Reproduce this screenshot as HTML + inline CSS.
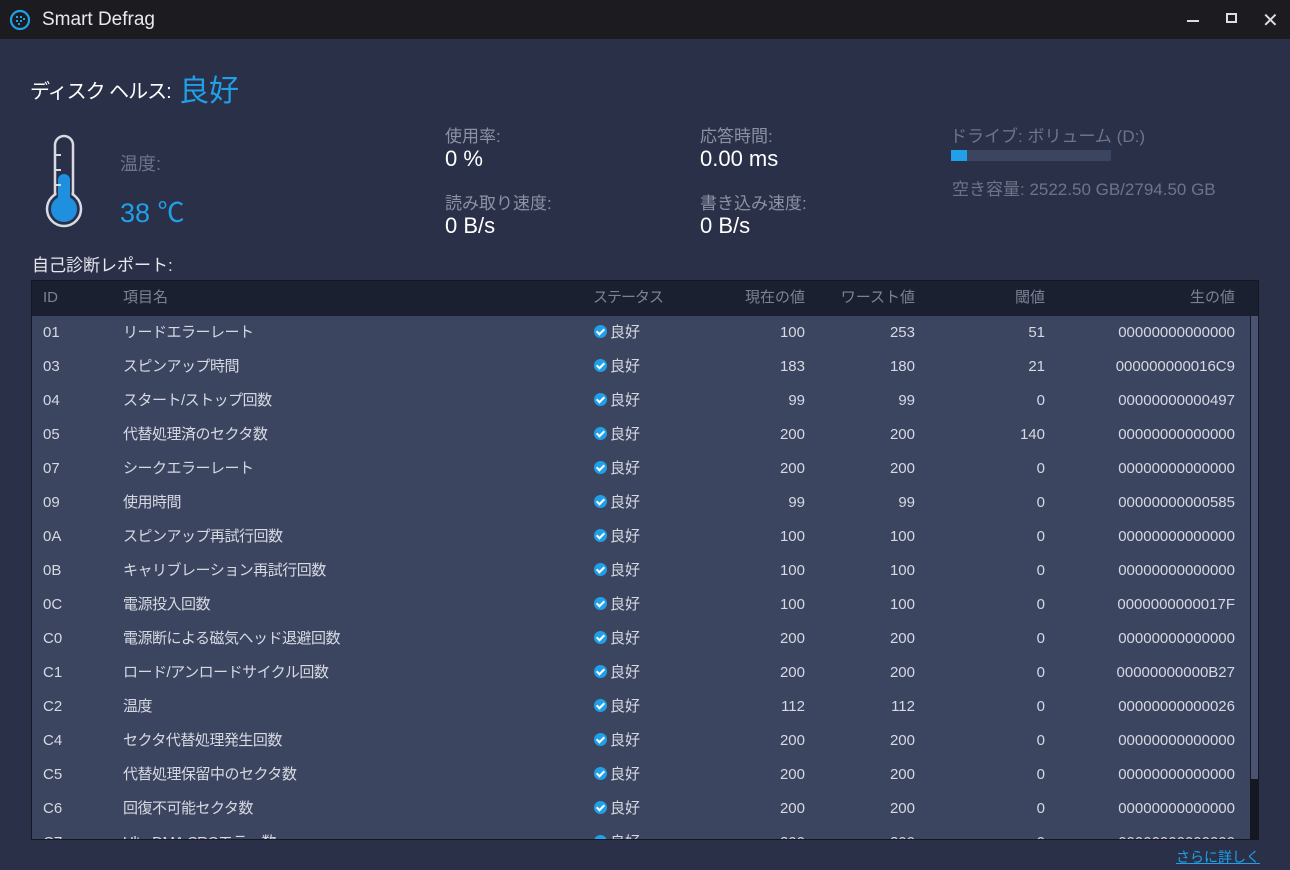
<!DOCTYPE html><html><head><meta charset="utf-8"><style>
body{margin:0;width:1290px;height:870px;background:#2a3048;font-family:"Liberation Sans","Noto Sans CJK JP",sans-serif;overflow:hidden;position:relative;color:#fff}
.a{position:absolute;white-space:nowrap}
.tb{position:absolute;left:0;top:0;width:1290px;height:39px;background:#1b1b20}
.g{color:#8c92a3}
.tbl{position:absolute;left:31px;top:280px;width:1228px;height:560px;background:#3c4560;overflow:hidden;border:1px solid #151820;box-sizing:border-box}
.hd{position:absolute;left:0;top:0;width:1228px;height:35px;background:#1b2031;color:#7c8294;font-size:15px}
.r{position:absolute;left:0;width:1218px;height:34px;font-size:15px;color:#d6d9e2}
.r span,.hd span{position:absolute;top:0;line-height:34px}
.ck{display:inline-block;width:13px;height:13px;border-radius:50%;background:#1fa0e8;position:relative;vertical-align:-1px;margin-right:3px}
.ck:after{content:"";position:absolute;left:4px;top:2px;width:3px;height:6px;border:solid #fff;border-width:0 2px 2px 0;transform:rotate(45deg)}
</style></head><body>
<div class="tb"></div>
<svg class="a" style="left:9px;top:9px" width="22" height="22"><circle cx="11" cy="11" r="9" fill="none" stroke="#1fa0e8" stroke-width="2.2"/><g fill="#1fa0e8"><rect x="7" y="7" width="2" height="2"/><rect x="11" y="7" width="2" height="2"/><rect x="7" y="11" width="2" height="2"/><rect x="11" y="11" width="2" height="2"/><rect x="14" y="9" width="2" height="2"/><rect x="9" y="14" width="2" height="2"/></g></svg>
<div class="a" style="left:42px;top:9px;font-size:19px;color:#e8e8ee">Smart Defrag</div>
<div class="a" style="left:1187px;top:20px;width:12px;height:2px;background:#ddd"></div>
<div class="a" style="left:1226px;top:13px;width:11px;height:10px;border:2px solid #ddd;box-sizing:border-box;border-top-width:2px"></div>
<div class="a" style="left:1262px;top:8px;font-size:20px;color:#ddd">✕</div>
<div class="a" style="left:30px;top:75px;font-size:20px;letter-spacing:-1px">ディスク ヘルス:</div>
<div class="a" style="left:179px;top:66px;font-size:30px;color:#1fa0e8">良好</div>
<svg class="a" style="left:44px;top:134px" width="42" height="96"><rect x="11" y="2" width="18" height="70" rx="9" fill="none" stroke="#d8dbe3" stroke-width="2.5"/><circle cx="20" cy="75" r="17" fill="#2a3048" stroke="#d8dbe3" stroke-width="2.5"/><rect x="12.5" y="40" width="15" height="36" fill="#2a3048"/><rect x="14" y="40" width="12" height="38" rx="6" fill="#1f8fe0"/><circle cx="20" cy="75" r="13" fill="#1f8fe0"/><g stroke="#d8dbe3" stroke-width="2"><line x1="12" y1="21" x2="17" y2="21"/><line x1="12" y1="36" x2="17" y2="36"/><line x1="12" y1="51" x2="17" y2="51"/></g></svg>
<div class="a g" style="left:120px;top:150px;font-size:18px;color:#6e7488">温度:</div>
<div class="a" style="left:120px;top:191px;font-size:27px;color:#1fa0e8">38 ℃</div>
<div class="a g" style="left:445px;top:122px;font-size:17px">使用率:</div>
<div class="a" style="left:445px;top:146px;font-size:22px">0 %</div>
<div class="a g" style="left:445px;top:189px;font-size:17px">読み取り速度:</div>
<div class="a" style="left:445px;top:213px;font-size:22px">0 B/s</div>
<div class="a g" style="left:700px;top:122px;font-size:17px">応答時間:</div>
<div class="a" style="left:700px;top:146px;font-size:22px">0.00 ms</div>
<div class="a g" style="left:700px;top:189px;font-size:17px">書き込み速度:</div>
<div class="a" style="left:700px;top:213px;font-size:22px">0 B/s</div>
<div class="a" style="left:950px;top:122px;font-size:17px;color:#6e7488">ドライブ: ボリューム (D:)</div>
<div class="a" style="left:951px;top:150px;width:160px;height:11px;background:#3c4560"></div>
<div class="a" style="left:951px;top:150px;width:16px;height:11px;background:#1fa0e8"></div>
<div class="a" style="left:952px;top:175px;font-size:17px;color:#6e7488">空き容量: 2522.50 GB/2794.50 GB</div>
<div class="a" style="left:32px;top:251px;font-size:17px;color:#e8e8ee">自己診断レポート:</div>
<div class="tbl">
<div class="hd"><span style="left:11px">ID</span><span style="left:91px">項目名</span><span style="left:561px;letter-spacing:-1px">ステータス</span><span style="right:455px">現在の値</span><span style="right:345px">ワースト値</span><span style="right:215px">閾値</span><span style="right:25px">生の値</span></div>
<div id="rows"></div>
<div class="a" style="left:1218px;top:35px;width:10px;height:525px;background:#151820"></div>
<div class="a" style="left:1219px;top:35px;width:8px;height:463px;background:#4a5370"></div>
</div>
<div class="a" style="right:30px;top:847px;font-size:14px;color:#1fa0e8;text-decoration:underline">さらに詳しく</div>
<script>
var d=[["01","リードエラーレート",100,253,51,"00000000000000"],["03","スピンアップ時間",183,180,21,"000000000016C9"],["04","スタート/ストップ回数",99,99,0,"00000000000497"],["05","代替処理済のセクタ数",200,200,140,"00000000000000"],["07","シークエラーレート",200,200,0,"00000000000000"],["09","使用時間",99,99,0,"00000000000585"],["0A","スピンアップ再試行回数",100,100,0,"00000000000000"],["0B","キャリブレーション再試行回数",100,100,0,"00000000000000"],["0C","電源投入回数",100,100,0,"0000000000017F"],["C0","電源断による磁気ヘッド退避回数",200,200,0,"00000000000000"],["C1","ロード/アンロードサイクル回数",200,200,0,"00000000000B27"],["C2","温度",112,112,0,"00000000000026"],["C4","セクタ代替処理発生回数",200,200,0,"00000000000000"],["C5","代替処理保留中のセクタ数",200,200,0,"00000000000000"],["C6","回復不可能セクタ数",200,200,0,"00000000000000"],["C7","UltraDMA CRCエラー数",200,200,0,"00000000000000"]];
var h="";d.forEach(function(r,i){h+='<div class="r" style="top:'+(35+i*34)+'px"><span style="left:11px">'+r[0]+'</span><span style="left:91px;letter-spacing:-0.5px">'+r[1]+'</span><span style="left:562px"><i class="ck"></i>良好</span><span style="right:445px">'+r[2]+'</span><span style="right:335px">'+r[3]+'</span><span style="right:205px">'+r[4]+'</span><span style="right:15px">'+r[5]+'</span></div>'});
document.getElementById("rows").innerHTML=h;
</script>
</body></html>
